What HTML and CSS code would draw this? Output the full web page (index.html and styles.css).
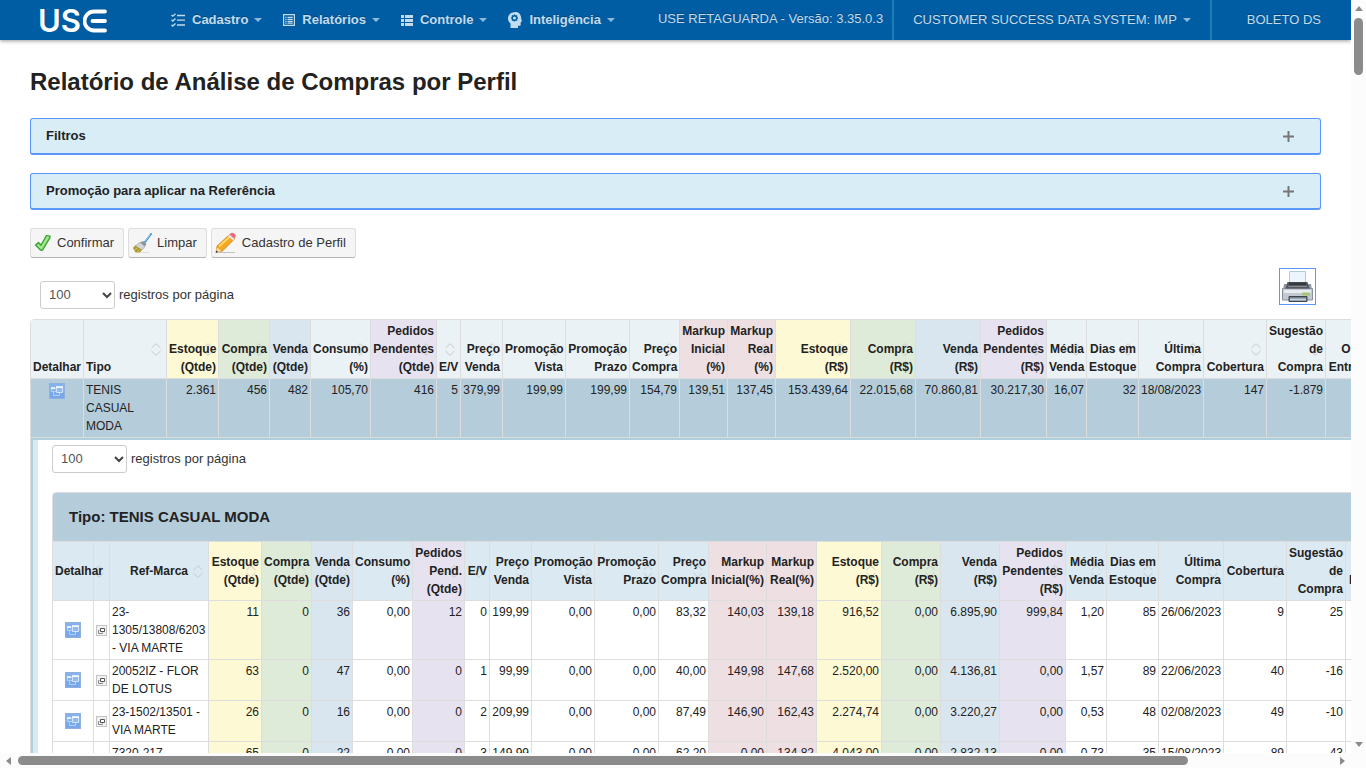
FILE: index.html
```html
<!DOCTYPE html>
<html lang="pt-BR">
<head>
<meta charset="utf-8">
<title>Relatório de Análise de Compras por Perfil</title>
<link rel="stylesheet" href="styles.css">
</head>
<body>
<svg class="sprite" aria-hidden="true">
  <symbol id="open" viewBox="0 0 16 16">
    <rect x=".5" y=".5" width="15" height="15" fill="#86b3f0" stroke="#8fb0de"/>
    <path d="M1 9h14v6H1z" fill="#79a8ea"/>
    <path d="M2.500 5.500h5v3h-5zM4.500 9v3.500h6V10" fill="none" stroke="#b3d0f7"/>
    <path d="M2 5h4" stroke="#fff" stroke-width="1.500"/>
    <path d="M7.500 4.500h6v5h-6z" fill="#8fbaf4" stroke="#d3e4fb"/>
    <path d="M7 4h7" stroke="#fff" stroke-width="1.500"/>
  </symbol>
  <symbol id="popup" viewBox="0 0 11 11">
    <rect x=".5" y=".5" width="10" height="10" fill="#f1f1f1" stroke="#c4c4c4"/>
    <path d="M4.500 3.500h4v3h-4z" fill="#fff" stroke="#555"/><path d="M3.500 5.500h-1v3h4v-1" fill="none" stroke="#8a8a8a"/>
  </symbol>
</svg>
<div class="window">
  <div class="view">
    <header class="navbar">
      <a class="brand" href="#" aria-label="USE"><span>US</span><svg width="24" height="24" viewBox="0 0 24 24"><path d="M22 2.500H11A9.500 9.500 0 0 0 11 21.500H22M9.500 12H22" fill="none" stroke="#fff" stroke-width="3.800" stroke-linecap="round"/></svg></a>
      <nav class="menu">
        <a href="#"><svg width="14" height="14" viewBox="0 0 14 14" fill="none" stroke="currentColor" stroke-width="1.300"><path d="M.5 2l1.300 1.200L4.500.8M.5 6.800L1.800 8l2.700-2.400M.5 11.800L1.800 13l2.700-2.400M6 2.500h8M6 7.200h8M6 12h8"/></svg>Cadastro<i class="caret"></i></a>
        <a href="#"><svg width="12" height="12" viewBox="0 0 12 12" fill="none" stroke="currentColor" stroke-width="1.200"><path d="M.6.6h10.800v10.800H.6zM2.300 3.300h1.200M4.500 3.300h5.200M2.300 5.300h1.200M4.500 5.300h5.200M2.300 7.300h1.200M4.500 7.300h5.200M2.300 9.200h1.200M4.500 9.200h5.200"/></svg>Relatórios<i class="caret"></i></a>
        <a href="#"><svg width="12" height="12" viewBox="0 0 12 12" fill="currentColor"><path d="M0 1h3v3H0zM4 1h8v3H4zM0 5h3v3H0zM4 5h8v3H4zM0 9h3v3H0zM4 9h8v3H4z"/></svg>Controle<i class="caret"></i></a>
        <a href="#"><svg width="14" height="16" viewBox="0 0 14 16"><path d="M7.500 0C3.200 0 0 2.800 0 6.500c0 2.300 1 3.700 2.500 5V16H10v-2.200h1.500c.8 0 1.200-.5 1.200-1.300V10l1.300-.6-.8-3C13 2.500 11 0 7.500 0z" fill="currentColor"/><circle cx="6.500" cy="6" r="2.300" fill="none" stroke="#005da3" stroke-width="1.500"/><path d="M6.500 2.500v1M6.500 8.500v1M3 6h1M9 6h1M4 3.500l.8.800M8.200 7.700l.8.800M9 3.500l-.8.800M4.800 7.700l-.8.800" stroke="#005da3" stroke-width="1.200"/></svg>Inteligência<i class="caret"></i></a>
      </nav>
      <div class="account">
        <span class="version">USE RETAGUARDA - Versão: 3.35.0.3</span>
        <a class="company" href="#">CUSTOMER SUCCESS DATA SYSTEM: IMP<i class="caret"></i></a>
        <a class="user" href="#">BOLETO DS</a>
      </div>
    </header>
    <main class="content">
      <h1>Relatório de Análise de Compras por Perfil</h1>
      <button class="panel" type="button"><span>Filtros</span><svg width="11" height="11" viewBox="0 0 11 11"><path d="M5.500 0v11M0 5.500h11" stroke="#777" stroke-width="2"/></svg></button>
      <button class="panel" type="button"><span>Promoção para aplicar na Referência</span><svg width="11" height="11" viewBox="0 0 11 11"><path d="M5.500 0v11M0 5.500h11" stroke="#777" stroke-width="2"/></svg></button>
      <div class="actions">
        <button type="button"><svg width="18" height="18" viewBox="0 0 18 18"><path d="M1.500 11l3-2.500 2.500 2.500L12.500 1.500l3.500.5q.5 1-.5 2.500L9 15.500q-1.500 1.500-3 .2z" fill="#8ade74" stroke="#2f9e2f" stroke-width="1.200" stroke-linejoin="round"/><path d="M3.500 11.200l3.500 3 7-11.500" fill="none" stroke="#b9f0a4"/></svg>Confirmar</button>
        <button type="button"><svg width="20" height="20" viewBox="0 0 20 20"><path d="M19 1l-6 8" stroke="#4598d0" stroke-width="2" stroke-linecap="round"/><path d="M18 1.500l-5 6.500" stroke="#a6d7f1" stroke-width="1"/><path d="M11 8l3.500 3-1.500 2.500L8 9.500z" fill="#8c949a"/><path d="M8 9.500l5 4-3 3.500-7-4z" fill="#d4d7d4" stroke="#8f9695" stroke-width=".6"/><path d="M3 12.500l7 4.500-2 2.500H3.500L1 15z" fill="#b0992e"/><path d="M3 17l2-2M5.500 18.500l2-2" stroke="#dccb6a"/><path d="M9 19.500h8" stroke="#ddd"/></svg>Limpar</button>
        <button type="button"><svg width="22" height="22" viewBox="0 0 22 22"><path d="M4 20.500h16" stroke="#c2c2c2"/><path d="M2 14L14.500 2.500l5 4.500L7.500 19 1 20.500z" fill="#f4a81d" stroke="#c77a15" stroke-width=".7"/><path d="M4 14.500l11.500-10.500" stroke="#ffd66b" stroke-width="2"/><path d="M2 15.500L6.500 19 1 20.500z" fill="#f6dfb6"/><path d="M1.300 18.500l2 1.500-2.500.7z" fill="#333"/><path d="M14.500 2.500l1.500-1.500q3-1 5 2.500l-1.500 3.500z" fill="#ef6b78"/><path d="M13 4l5 4.500 1.500-1.500-5-4.500z" fill="#e2e3e8"/></svg>Cadastro de Perfil</button>
      </div>
      <div class="toolbar">
        <label class="length"><select><option>100</option></select> registros por página</label>
        <button class="print" type="button" aria-label="Imprimir"><svg width="33" height="33" viewBox="0 0 33 33"><path d="M8.500 1.500h16V15h-16z" fill="#edf5fc" stroke="#b3cbe2"/><path d="M3 14h27l1 6H2z" fill="#8f97a3"/><path d="M1.500 18.500h30v11.500h-30z" fill="#c3c9d3" stroke="#87909c"/><path d="M3 20h27v3H3z" fill="#e8ebef"/><path d="M6.500 12h20l2 6.500h-24z" fill="#545961"/><path d="M8 12.500h17V15H8z" fill="#34383f"/><path d="M7 16.500h19" stroke="#858a91"/><rect x="21" y="22.500" width="8" height="3" rx="1" fill="#a4c478"/><path d="M8 26.500h18v5H8z" fill="#737c89" stroke="#3d4550"/><path d="M9 29.500h16" stroke="#c5d2e0" stroke-width="2"/></svg></button>
      </div>

      <table class="grid outer">
        <colgroup><col class="w52"><col class="w83"><col class="w52 yellow"><col class="w51 green"><col class="w41 blue"><col class="w60"><col class="w66 purple"><col class="w24"><col class="w42"><col class="w63"><col class="w64"><col class="w50"><col class="w48 pink"><col class="w48 pink"><col class="w75 yellow"><col class="w65 green"><col class="w65 blue"><col class="w66 purple"><col class="w40"><col class="w52"><col class="w65"><col class="w63"><col class="w59"><col class="w57"></colgroup>
        <thead>
          <tr><th class="left plain">Detalhar</th><th class="left">Tipo</th><th>Estoque (Qtde)</th><th>Compra (Qtde)</th><th>Venda (Qtde)</th><th>Consumo (%)</th><th>Pedidos Pendentes (Qtde)</th><th>E/V</th><th>Preço Venda</th><th>Promoção Vista</th><th>Promoção Prazo</th><th>Preço Compra</th><th>Markup Inicial (%)</th><th>Markup Real (%)</th><th>Estoque<br>(R$)</th><th>Compra<br>(R$)</th><th>Venda<br>(R$)</th><th>Pedidos Pendentes (R$)</th><th>Média Venda</th><th>Dias em Estoque</th><th>Última<br>Compra</th><th>Cobertura</th><th>Sugestão de Compra</th><th>Outras Entradas</th></tr>
        </thead>
        <tbody>
          <tr class="selected"><td><button class="icon" type="button" aria-label="Detalhar"><svg width="16" height="16"><use href="#open"/></svg></button></td><td class="left">TENIS CASUAL MODA</td><td>2.361</td><td>456</td><td>482</td><td>105,70</td><td>416</td><td>5</td><td>379,99</td><td>199,99</td><td>199,99</td><td>154,79</td><td>139,51</td><td>137,45</td><td>153.439,64</td><td>22.015,68</td><td>70.860,81</td><td>30.217,30</td><td>16,07</td><td>32</td><td>18/08/2023</td><td>147</td><td>-1.879</td><td></td></tr>
          <tr><td class="nest" colspan="24"><div class="detail">
            <label class="length"><select><option>100</option></select> registros por página</label>
            <table class="grid inner">
              <colgroup><col class="w40"><col class="w16"><col class="w99"><col class="w53 yellow"><col class="w50 green"><col class="w41 blue"><col class="w60"><col class="w52 purple"><col class="w25"><col class="w42"><col class="w63"><col class="w64"><col class="w50"><col class="w58 pink"><col class="w50 pink"><col class="w65 yellow"><col class="w59 green"><col class="w59 blue"><col class="w66 purple"><col class="w41"><col class="w52"><col class="w65"><col class="w63"><col class="w59"><col class="w57"></colgroup>
              <thead>
                <tr><th class="group" colspan="25">Tipo: TENIS CASUAL MODA</th></tr>
                <tr><th class="left plain">Detalhar</th><th></th><th class="center">Ref-Marca</th><th>Estoque (Qtde)</th><th>Compra (Qtde)</th><th>Venda (Qtde)</th><th>Consumo (%)</th><th>Pedidos Pend. (Qtde)</th><th>E/V</th><th>Preço Venda</th><th>Promoção Vista</th><th>Promoção Prazo</th><th>Preço Compra</th><th>Markup Inicial(%)</th><th>Markup Real(%)</th><th>Estoque<br>(R$)</th><th>Compra<br>(R$)</th><th>Venda<br>(R$)</th><th>Pedidos Pendentes (R$)</th><th>Média Venda</th><th>Dias em Estoque</th><th>Última<br>Compra</th><th>Cobertura</th><th>Sugestão de Compra</th><th>Outras Entradas</th></tr>
              </thead>
              <tbody>
                <tr><td class="tool"><button class="icon" type="button" aria-label="Detalhar"><svg width="16" height="16"><use href="#open"/></svg></button></td><td class="tool"><button class="icon" type="button" aria-label="Abrir"><svg width="11" height="11"><use href="#popup"/></svg></button></td><td class="left">23-<wbr>1305/13808/6203 - VIA MARTE</td><td>11</td><td>0</td><td>36</td><td>0,00</td><td>12</td><td>0</td><td>199,99</td><td>0,00</td><td>0,00</td><td>83,32</td><td>140,03</td><td>139,18</td><td>916,52</td><td>0,00</td><td>6.895,90</td><td>999,84</td><td>1,20</td><td>85</td><td>26/06/2023</td><td>9</td><td>25</td><td></td></tr>
                <tr><td class="tool"><button class="icon" type="button" aria-label="Detalhar"><svg width="16" height="16"><use href="#open"/></svg></button></td><td class="tool"><button class="icon" type="button" aria-label="Abrir"><svg width="11" height="11"><use href="#popup"/></svg></button></td><td class="left">20052IZ - FLOR DE LOTUS</td><td>63</td><td>0</td><td>47</td><td>0,00</td><td>0</td><td>1</td><td>99,99</td><td>0,00</td><td>0,00</td><td>40,00</td><td>149,98</td><td>147,68</td><td>2.520,00</td><td>0,00</td><td>4.136,81</td><td>0,00</td><td>1,57</td><td>89</td><td>22/06/2023</td><td>40</td><td>-16</td><td></td></tr>
                <tr><td class="tool"><button class="icon" type="button" aria-label="Detalhar"><svg width="16" height="16"><use href="#open"/></svg></button></td><td class="tool"><button class="icon" type="button" aria-label="Abrir"><svg width="11" height="11"><use href="#popup"/></svg></button></td><td class="left">23-1502/13501 - VIA MARTE</td><td>26</td><td>0</td><td>16</td><td>0,00</td><td>0</td><td>2</td><td>209,99</td><td>0,00</td><td>0,00</td><td>87,49</td><td>146,90</td><td>162,43</td><td>2.274,74</td><td>0,00</td><td>3.220,27</td><td>0,00</td><td>0,53</td><td>48</td><td>02/08/2023</td><td>49</td><td>-10</td><td></td></tr>
                <tr><td></td><td></td><td class="left">7320-217</td><td>65</td><td>0</td><td>22</td><td>0,00</td><td>0</td><td>3</td><td>149,99</td><td>0,00</td><td>0,00</td><td>62,20</td><td>0,00</td><td>134,82</td><td>4.043,00</td><td>0,00</td><td>2.832,13</td><td>0,00</td><td>0,73</td><td>35</td><td>15/08/2023</td><td>89</td><td>-43</td><td></td></tr>
              </tbody>
            </table>
          </div></td></tr>
        </tbody>
      </table>
    </main>
  </div>
  <div class="bar vertical"><i class="up"></i><div class="track"><div class="thumb"></div></div><i class="down"></i></div>
  <div class="bar horizontal"><i class="prev"></i><div class="track"><div class="thumb"></div></div><i class="next"></i></div>
  <div class="corner"></div>
</div>
</body>
</html>
```
FILE: styles.css
```css
* { box-sizing: border-box; }
body {
  margin: 0;
  font: 13px/18px "Liberation Sans", Arial, sans-serif;
  color: #222;
  background: #fff;
}
button, select { font: inherit; color: inherit; margin: 0; }
a { color: inherit; text-decoration: none; }
.sprite { display: none; }

.window {
  display: grid;
  grid-template: minmax(0, 1fr) 15px / minmax(0, 1fr) 15px;
  height: 100vh;
  overflow: hidden;
}
.view { overflow: hidden; }

/* Navigation */
.navbar {
  display: flex;
  height: 40px;
  padding-left: 38px;
  background: #005da3;
  color: #c3dced;
  box-shadow: 0 1px 4px rgba(0, 0, 0, .4);
  text-shadow: 0 -1px 0 rgba(0, 0, 0, .25);
  white-space: nowrap;
}
.brand {
  display: flex;
  align-items: center;
  gap: 2px;
  width: 133px;
  padding-top: 2px;
  color: #fff;
  font: 600 31px/40px Inter, sans-serif;
  text-shadow: none;
}
.menu { display: flex; gap: 21px; font-weight: bold; }
.menu a { display: flex; align-items: center; }
.menu svg { margin-right: 7px; }
.caret {
  display: inline-block;
  margin-left: 6px;
  border: 4px solid transparent;
  border-top-color: #8fb9d8;
  border-bottom: 0;
}
.account { display: flex; margin-left: auto; }
.version { padding-right: 9px; line-height: 38px; }
.company, .user { display: flex; align-items: center; border-left: 2px solid #207fb0; }
.company { padding: 0 19px; }
.user { padding: 0 30px 0 35px; }

/* Page */
.content { padding: 27px 30px 0; }
h1 { margin: 0 0 21px; font-size: 24px; line-height: 30px; }
.panel {
  display: flex;
  align-items: center;
  justify-content: space-between;
  width: 100%;
  margin-bottom: 18px;
  padding: 8px 26px 8px 15px;
  border: 1px solid #5897fb;
  border-bottom-width: 2px;
  border-radius: 3px;
  background: #d9edf7;
  font-weight: bold;
}
.actions { display: flex; gap: 4px; }
.actions button {
  display: flex;
  align-items: center;
  gap: 5px;
  height: 30px;
  padding: 0 9px 0 3px;
  border: 1px solid #ddd;
  border-bottom-color: #b5b5b5;
  border-radius: 3px;
  background: #f5f5f5;
  color: #333;
}
.toolbar {
  display: flex;
  justify-content: space-between;
  align-items: flex-end;
  padding: 10px 5px 10px 10px;
}
.length { display: flex; align-items: center; gap: 4px; color: #333; line-height: 16px; }
.length select {
  appearance: none;
  width: 75px;
  height: 28px;
  padding: 0 8px;
  border: 1px solid #ccc;
  border-radius: 3px;
  color: #555;
  background: #fff url("data:image/svg+xml,%3Csvg xmlns='http://www.w3.org/2000/svg' width='10' height='7'%3E%3Cpath d='M1 1l4 4 4-4' fill='none' stroke='%23444' stroke-width='2'/%3E%3C/svg%3E") no-repeat right 2px center;
}
.print {
  width: 37px;
  height: 37px;
  margin-bottom: 4px;
  padding: 1px;
  border: 1px solid #5897fb;
  background: #fff;
}
.print svg, .icon svg { display: block; }

/* Tables */
.grid {
  table-layout: fixed;
  width: 100%;
  border: 1px solid #ddd;
  border-spacing: 0;
  border-radius: 4px;
  font-size: 12px;
  text-align: right;
}
.grid th, .grid td { padding: 2px; border: 0 solid #ddd; vertical-align: top; }
.grid tr > * + * { border-left-width: 1px; }
.grid tbody td, .grid tr + tr > th { border-top-width: 1px; }
.grid th {
  background: url("data:image/svg+xml,%3Csvg xmlns='http://www.w3.org/2000/svg' width='10' height='13'%3E%3Cpath d='M.5 5L5 .7 9.500 5M.5 8L5 12.300 9.500 8' fill='none' stroke='%23c6c9cb'/%3E%3C/svg%3E") no-repeat right 5px center;
}
.grid .plain, .grid .group { background-image: none; }
.grid .left { text-align: left; }
.grid .center { text-align: center; }
.outer > thead th { vertical-align: bottom; background-color: #eaf2f5; }
.inner thead th { vertical-align: middle; background-color: #dbe9f2; }
.outer > thead > tr > :is(:nth-child(3), :nth-child(15)),
.inner tr + tr > th:is(:nth-child(4), :nth-child(16)),
.inner .yellow { background-color: #fdf9d4; }
.outer > thead > tr > :is(:nth-child(4), :nth-child(16)),
.inner tr + tr > th:is(:nth-child(5), :nth-child(17)),
.inner .green { background-color: #dfebd9; }
.outer > thead > tr > :is(:nth-child(5), :nth-child(17)),
.inner tr + tr > th:is(:nth-child(6), :nth-child(18)),
.inner .blue { background-color: #d9e6f0; }
.outer > thead > tr > :is(:nth-child(7), :nth-child(18)),
.inner tr + tr > th:is(:nth-child(8), :nth-child(19)),
.inner .purple { background-color: #e6e2f0; }
.outer > thead > tr > :is(:nth-child(13), :nth-child(14)),
.inner tr + tr > th:is(:nth-child(14), :nth-child(15)),
.inner .pink { background-color: #eedfe2; }
.inner tr + tr > th.plain { white-space: nowrap; }
.selected { background: #b5cddb; }
.grid .group {
  height: 48px;
  padding: 0 16px;
  background-color: #b5cddb;
  border-radius: 3px 3px 0 0;
  font-size: 15px;
  text-align: left;
}
.icon { display: block; margin: 2px auto; padding: 0; border: 0; background: none; }
.grid .tool { vertical-align: middle; }
.grid .nest { padding: 0; text-align: left; }
.detail {
  padding: 5px 14px 5px 19px;
  border: 2px solid #add0dc;
  border-right: 0;
  background: linear-gradient(90deg, #dbe9f2 5px, #fff 5px);
}
.detail .length { margin-bottom: 19px; font-size: 13px; }

.w16 { width: 16px; } .w24 { width: 24px; } .w25 { width: 25px; }
.w40 { width: 40px; } .w41 { width: 41px; } .w42 { width: 42px; }
.w48 { width: 48px; } .w50 { width: 50px; } .w51 { width: 51px; }
.w52 { width: 52px; } .w53 { width: 53px; } .w57 { width: 57px; }
.w58 { width: 58px; } .w59 { width: 59px; } .w60 { width: 60px; }
.w63 { width: 63px; } .w64 { width: 64px; } .w65 { width: 65px; }
.w66 { width: 66px; } .w75 { width: 75px; } .w83 { width: 83px; }
.w99 { width: 99px; }

/* Scroll bars */
.bar { display: flex; align-items: center; background: #fcfcfc; }
.bar i { border: 4px solid transparent; flex: none; }
.bar .track { flex: 1; display: flex; }
.bar .thumb { border-radius: 5px; background: #8b8b8b; }
.vertical { flex-direction: column; gap: 7px; padding: 6px 0; }
.vertical .thumb { width: 9px; height: 8%; }
.vertical .up { border-bottom: 5px solid #8b8b8b; border-top: 0; }
.vertical .down { border-top: 5px solid #8b8b8b; border-bottom: 0; }
.horizontal { gap: 7px; padding: 0 6px; }
.horizontal .thumb { width: 89%; height: 9px; }
.horizontal .prev { border-right: 5px solid #8b8b8b; border-left: 0; }
.horizontal .next { border-left: 5px solid #8b8b8b; border-right: 0; }
.corner { background: #fcfcfc; }
```
